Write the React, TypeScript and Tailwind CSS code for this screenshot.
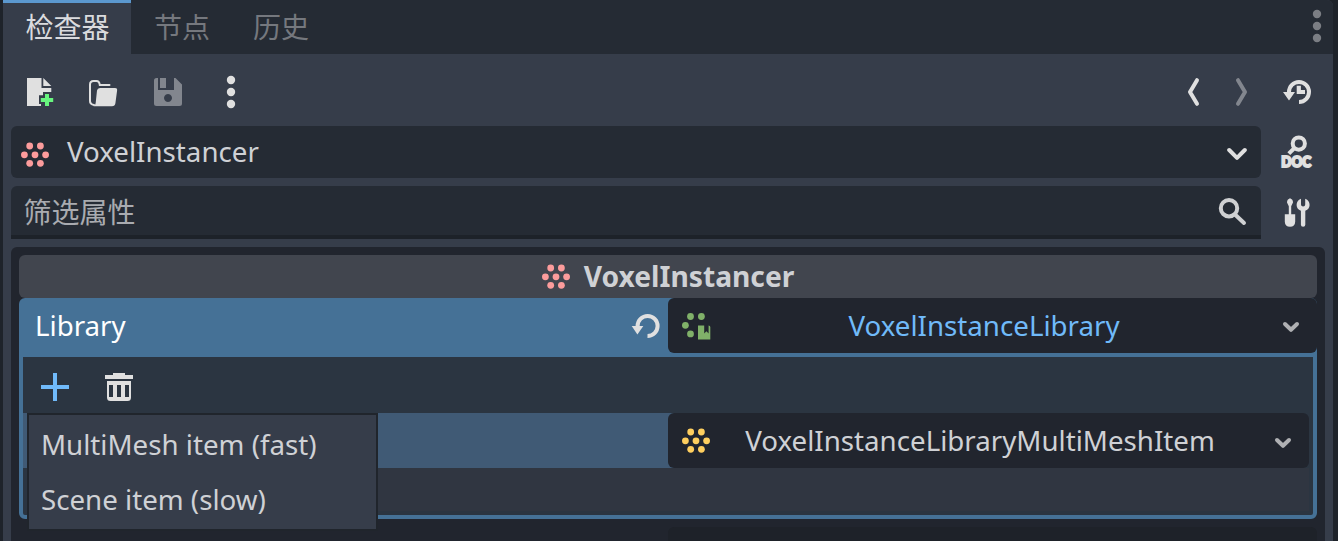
import React from "react";

const Dots = ({ className }: { className: string }) => (
  <svg width="28" height="26" viewBox="0 0 28 26" className={"shrink-0 " + className} fill="currentColor">
    <circle cx="8.7" cy="4" r="3.4" />
    <circle cx="19.4" cy="4" r="3.4" />
    <circle cx="3.4" cy="12.8" r="3.4" />
    <circle cx="14" cy="12.8" r="3.4" />
    <circle cx="24.6" cy="12.8" r="3.4" />
    <circle cx="8.7" cy="21.3" r="3.4" />
    <circle cx="19.4" cy="21.3" r="3.4" />
  </svg>
);

const Kebab = ({ className }: { className: string }) => (
  <svg width="10" height="34" viewBox="0 0 10 34" className={"shrink-0 " + className} fill="currentColor">
    <circle cx="5" cy="5" r="4.2" />
    <circle cx="5" cy="17" r="4.2" />
    <circle cx="5" cy="29" r="4.2" />
  </svg>
);

const NewFile = () => (
  <svg width="32" height="32" viewBox="0 0 32 32" className="shrink-0">
    <path fill="#e0e0e0" d="M3 2H17.5V12H27.3V16H19V19.3H15V28H17V30H3Z M19.3 2L27.3 10H19.3Z" />
    <path fill="#68f57f" d="M21 18h4v4h4.2v4H25v4h-4v-4h-4.2v-4H21Z" />
  </svg>
);

const Folder = () => (
  <svg width="32" height="32" viewBox="0 0 32 32" className="shrink-0">
    <path fill="none" stroke="#e0e0e0" strokeWidth="2" strokeLinecap="round" d="M6 29C3 28.5 2 27.5 2 25V8.5Q2 5 5.5 5H8.5Q11.3 5 11.8 9H21.5" />
    <path fill="#e0e0e0" d="M9 14.5Q9.4 12 12 12H27q2.4 0 2.1 2.4l-1.7 12.8q-.4 3-3.4 3H5.5Q7.4 29.5 7.7 27Z" />
  </svg>
);

const Save = () => (
  <svg width="32" height="32" viewBox="0 0 32 32" className="shrink-0">
    <path fill="#82868e" fillRule="evenodd" d="M4.5 2H6V14H22V2H23.5L30 8.5V27.5Q30 30 27.5 30H4.5Q2 30 2 27.5V4.5Q2 2 4.5 2ZM16 18a4 4 0 1 0 .01 0ZM8 2H14V12H8Z" />
  </svg>
);

const History = () => (
  <svg width="32" height="32" viewBox="0 0 32 32" className="shrink-0">
    <path fill="none" stroke="#e0e0e0" strokeWidth="4" d="M8 17V16A10 10 0 1 1 18 26" />
    <path fill="#e0e0e0" d="M2 16H14L8 24.6ZM15.7 9.7h4.2v4.2H24v4.2H15.7Z" />
  </svg>
);

const Doc = () => (
  <svg width="32" height="34" viewBox="0 0 32 34" className="shrink-0 overflow-visible">
    <circle cx="18.8" cy="8.6" r="6.1" fill="none" stroke="#e0e0e0" strokeWidth="4" />
    <path stroke="#e0e0e0" strokeWidth="4" d="M14.5 13L8.8 18.6" />
    <text x="1.2" y="32.3" fill="#e0e0e0" stroke="#e0e0e0" strokeWidth="2" textLength="30" lengthAdjust="spacingAndGlyphs" className="font-['Lato'] text-[14.5px] font-black">DOC</text>
  </svg>
);

const Tools = () => (
  <svg width="32" height="32" viewBox="0 0 32 32" className="shrink-0">
    <g fill="#e0e0e0" transform="translate(2 -0.7)">
      <path d="M8 2Q11 3 11 6.3L9.2 10V18H13.2V25.5Q13 30.5 8 30.5Q3 30.5 2.8 25.5V18H6.8V10L5 6.3Q5 3 8 2Z" />
      <path d="M19 2.4V8.2Q19 10.2 21.1 10.2Q23.2 10.2 23.2 8.2V2.4Q27.6 4.2 27.6 8.6Q27.6 12.6 23.3 14.5V28.5Q23.3 30.5 21.1 30.5Q18.9 30.5 18.9 28.5V14.5Q14.6 12.6 14.6 8.6Q14.6 4.2 19 2.4Z" />
    </g>
  </svg>
);

const Angle = ({ d, color }: { d: string; color: string }) => (
  <svg width="16" height="32" viewBox="0 0 16 32" className="shrink-0" fill="none" stroke={color} strokeWidth="4" strokeLinecap="round" strokeLinejoin="round">
    <path d={d} />
  </svg>
);

const SmallArrow = () => (
  <svg width="18" height="12" viewBox="0 0 18 12" className="shrink-0" fill="none" stroke="#afb0b3" strokeWidth="4" strokeLinecap="round" strokeLinejoin="round">
    <path d="M3 3L9 8.8L15 3" />
  </svg>
);

export default function App() {
  return (
    <div className="relative flex h-[541px] w-[1338px] overflow-hidden bg-[#1e232a] font-['Noto_Sans','Noto_Sans_CJK_SC',sans-serif] text-[27.7px] leading-none whitespace-nowrap text-[#cfd1d5]">
      <main className="ml-[3px] flex w-[1330px] flex-col overflow-hidden rounded-tr-[6px] bg-[#363d4a]">
        <div className="flex h-[54px] shrink-0 bg-[#252b34] text-[28px]">
          <div className="flex w-32 items-center justify-center border-t-[3px] border-[#5b98cf] bg-[#363d4a] pb-[3px] pl-px text-[#dadbde]">检查器</div>
          <div className="flex items-center pl-[23px] text-[#75787e]">节点</div>
          <div className="flex items-center pl-[43px] text-[#75787e]">历史</div>
          <div className="mt-[9px] mr-[11px] ml-auto"><Kebab className="text-[#7b7e84]" /></div>
        </div>

        <div className="flex h-[72px] shrink-0 items-center pt-1 pr-5 pl-[21px]">
          <NewFile />
          <div className="ml-8"><Folder /></div>
          <div className="ml-8"><Save /></div>
          <div className="ml-[42px]"><Kebab className="text-[#e0e0e0]" /></div>
          <div className="ml-auto flex items-center">
            <Angle d="M12 4.2L5 16L12 27.8" color="#e0e0e0" />
            <div className="ml-8"><Angle d="M5 4.2L12 16L5 27.8" color="#82868e" /></div>
            <div className="ml-8"><History /></div>
          </div>
        </div>

        <div className="flex h-[52px] shrink-0 items-center pl-2">
          <div className="flex h-[52px] w-[1250px] items-center rounded-[6px] bg-[#252b34] pr-[14px] pl-[10px]">
            <div className="pt-1.5"><Dots className="text-[#fc9c9c]" /></div>
            <span className="ml-[18px]">VoxelInstancer</span>
            <svg width="20" height="14" viewBox="0 0 20 14" className="mt-1 ml-auto" fill="none" stroke="#e0e0e0" strokeWidth="4" strokeLinecap="round" strokeLinejoin="round">
              <path d="M2.2 3L10 10.8L17.8 3" />
            </svg>
          </div>
          <div className="ml-[19px]"><Doc /></div>
        </div>

        <div className="mt-2 flex h-[53px] shrink-0 items-center pl-2">
          <div className="flex h-[53px] w-[1250px] items-center rounded-t-[6px] border-b-4 border-[#1d2229] bg-[#252b34] pr-[13px] pl-[12.5px] text-[28px] text-[#a9abb0]">
            <span className="pt-[3px]">筛选属性</span>
            <svg width="32" height="32" viewBox="0 0 32 32" className="mt-0.5 ml-auto" fill="none" stroke="#cfd0d2" strokeWidth="4">
              <circle cx="13" cy="12.2" r="8.2" />
              <path d="M19 18.5L28 27" strokeLinecap="round" />
            </svg>
          </div>
          <div className="ml-[19px]"><Tools /></div>
        </div>

        <section className="mt-2 ml-2 flex w-[1314px] flex-1 flex-col rounded-t-[6px] bg-[#21252e] px-2 pt-2">
          <header className="flex h-[43px] shrink-0 items-center justify-center rounded-[6px] bg-[#41454e] text-[28.2px] font-bold">
            <Dots className="text-[#fc9c9c]" />
            <span className="ml-[14px] pb-px">VoxelInstancer</span>
          </header>

          <div className="flex h-[55px] shrink-0 rounded-tl-[6px] rounded-tr-[6px] bg-[#457196]">
            <div className="flex w-[649px] items-center justify-between pr-[6px] pl-4 text-white">
              <span className="pt-px">Library</span>
              <svg width="32" height="32" viewBox="0 0 32 32">
                <path fill="none" stroke="#e0e0e0" strokeWidth="4" d="M7.6 17V16A10 10 0 1 1 17.5 26" />
                <path fill="#e0e0e0" d="M1.7 16H13.3L7.4 24.6Z" />
              </svg>
            </div>
            <div className="flex flex-1 items-center rounded-[6px] bg-[#21252e] pr-[17px] pl-[14px]">
              <svg width="30" height="28" viewBox="0 0 30 28" fill="#80b169">
                <circle cx="8.5" cy="4.5" r="3.4" />
                <circle cx="19.4" cy="4.5" r="3.4" />
                <circle cx="3.4" cy="13.3" r="3.4" />
                <circle cx="8.5" cy="21.9" r="3.4" />
                <path d="M16 13.5H22.2V21.5L24.4 19.3L26.6 21.5V13.5Q28.3 13.5 28.3 15V27.5H16Z" />
              </svg>
              <span className="flex-1 pt-px pr-[26px] text-center text-[#70baf9]">VoxelInstanceLibrary</span>
              <div className="pt-[3px]"><SmallArrow /></div>
            </div>
          </div>

          <div className="flex h-[166px] shrink-0 flex-col rounded-b-[6px] border-4 border-[#457196] bg-[#2b3541]">
            <div className="flex h-14 shrink-0 items-center pt-1 pl-4">
              <svg width="32" height="32" viewBox="0 0 32 32" fill="#70bafa">
                <path d="M14 2h4v12h12v4H18v12h-4V18H2v-4h12Z" />
              </svg>
              <svg width="32" height="32" viewBox="0 0 32 32" className="ml-8">
                <path fill="#e0e0e0" fillRule="evenodd" d="M10 2H22V4H30V8H2V4H10ZM4 10H28V26.5Q28 30 24.5 30H7.5Q4 30 4 26.5ZM6 14V26H10V14ZM14 14V26H18V14ZM22 14V26H26V14Z" />
              </svg>
            </div>
            <div className="flex h-[55px] shrink-0 pr-1">
              <div className="w-[651px] shrink-0 bg-[#405a75]" />
              <div className="-ml-1.5 flex flex-1 items-center rounded-[6px] bg-[#21252e] pr-[17px] pl-[14px]">
                <Dots className="text-[#ffcf5f]" />
                <span className="flex-1 pt-px pr-[24px] text-center">VoxelInstanceLibraryMultiMeshItem</span>
                <div className="pt-[5px]"><SmallArrow /></div>
              </div>
            </div>
            <div className="mr-1 ml-1 h-[43px] bg-[#303641]" />
          </div>
          <div className="mt-2 ml-[649px] flex-1 rounded-t-[6px] bg-[#1e2229]" />
        </section>
      </main>

      <div className="absolute top-[413px] left-[27px] flex h-[118px] w-[351px] flex-col border-2 border-[#20252c] bg-[#363d4a] pl-3">
        <div className="flex h-[60px] items-center">MultiMesh item (fast)</div>
        <div className="flex h-[50px] items-center">Scene item (slow)</div>
      </div>
    </div>
  );
}
